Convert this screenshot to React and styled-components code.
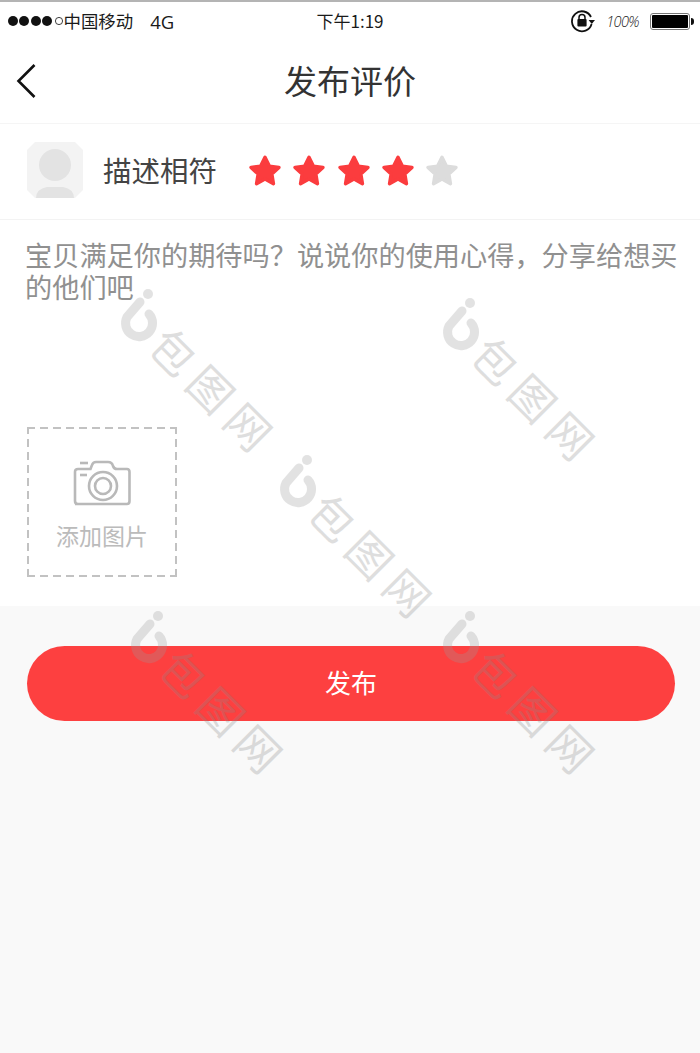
import React from "react";
import styled, { createGlobalStyle } from "styled-components";

const CJK = `"Noto Sans CJK SC", "Noto Sans", sans-serif`;

const GlobalStyle = createGlobalStyle`
  html, body {
    margin: 0;
    padding: 0;
    background: #f9f9f9;
  }
  * {
    box-sizing: border-box;
  }
`;

function App() {
  return (
    <Page>
      <GlobalStyle />
      <WhiteArea>
        <StatusBar>
          <StatusLeft>
            <Signal>
              {[0, 1, 2, 3].map((i) => (
                <Dot key={i} />
              ))}
              <Dot $empty />
            </Signal>
            <Carrier>中国移动</Carrier>
            <Network>4G</Network>
          </StatusLeft>
          <Clock>下午1:19</Clock>
          <StatusRight>
            <LockIcon />
            <Percent>100%</Percent>
            <Battery>
              <BatteryFill />
            </Battery>
          </StatusRight>
        </StatusBar>
        <NavBar>
          <BackButton>
            <svg width="24" height="36" viewBox="0 0 24 36" fill="none">
              <path d="M20.5 2 L4.5 18 L20.5 34" stroke="#111" strokeWidth="2.6" />
            </svg>
          </BackButton>
          <Title>发布评价</Title>
        </NavBar>
        <RatingRow>
          <Avatar>
            <svg width="56" height="56" viewBox="0 0 56 56">
              <circle cx="28" cy="23" r="16" fill="#e3e3e3" />
              <path d="M9 56 Q9 47 20 45 L36 45 Q47 47 47 56 Z" fill="#e3e3e3" />
            </svg>
          </Avatar>
          <RatingLabel>描述相符</RatingLabel>
          <Stars>
            {[true, true, true, true, false].map((on, i) => (
              <Star key={i} on={on} />
            ))}
          </Stars>
        </RatingRow>
        <Comment>宝贝满足你的期待吗？说说你的使用心得，分享给想买的他们吧</Comment>
        <AddPhoto>
          <CameraIcon />
          <AddPhotoText>添加图片</AddPhotoText>
        </AddPhoto>
      </WhiteArea>
      <Footer>
        <SubmitButton>发布</SubmitButton>
      </Footer>
      <Watermark $x={118} $y={288} />
      <Watermark $x={440} $y={297} />
      <Watermark $x={277} $y={454} />
      <Watermark $x={128} $y={610} />
      <Watermark $x={440} $y={610} />
    </Page>
  );
}

function Star({ on }) {
  const color = on ? "#fb3c3e" : "#dcdcdc";
  return (
    <svg width="32" height="32" viewBox="2 2.5 28 28">
      <path
        d="M16 4.5 L19.8 12.2 L28.2 13.4 L22 19.2 L23.4 27.6 L16 23.6 L8.6 27.6 L10 19.2 L3.8 13.4 L12.2 12.2 Z"
        fill={color}
        stroke={color}
        strokeWidth="3"
        strokeLinejoin="round"
      />
    </svg>
  );
}

function LockIcon() {
  return (
    <svg width="26" height="24" viewBox="0 0 26 24" fill="none">
      <path d="M21 8 A10 10 0 1 0 21.6 15" stroke="#111" strokeWidth="1.8" />
      <path d="M18.6 11 L25 11 L21.8 15 Z" fill="#111" />
      <path d="M9 10 V8.4 A3 3 0 0 1 15 8.4 V10" stroke="#111" strokeWidth="1.5" />
      <rect x="7.4" y="10" width="9.2" height="7.4" rx="1" fill="#111" />
    </svg>
  );
}

function CameraIcon() {
  return (
    <svg width="58" height="46" viewBox="0 0 58 46" fill="none" stroke="#b9b9b9" strokeWidth="2.6">
      <path d="M2 44 H54 Q56.5 44 56.5 41 V12 Q56.5 9 54 9 H44 Q41 9 40 6 Q39 2 35 2 H23 Q20 2 19 5 L17.5 9 H5 Q2 9 2 12 V41 Q2 44 5 44 Z" />
      <circle cx="30" cy="26" r="14" />
      <circle cx="30" cy="26" r="8" />
      <path d="M7 3 H15" />
      <path d="M7 15 H14" />
    </svg>
  );
}

function Watermark({ $x, $y }) {
  return (
    <WatermarkBox $x={$x} $y={$y}>
      <svg width="50" height="58" viewBox="0 0 50 58" fill="none" stroke="#9a9a9a">
        <circle cx="30" cy="6" r="5" fill="#9a9a9a" stroke="none" />
        <path
          d="M22 14 L9 29 A13.5 13.5 0 1 0 31 26"
          strokeWidth="9"
          strokeLinecap="round"
        />
      </svg>
      <WatermarkText>包图网</WatermarkText>
    </WatermarkBox>
  );
}

export default App;

const dashX = "repeating-linear-gradient(90deg, #c2c2c2 0 8px, transparent 8px 13px)";
const dashY = "repeating-linear-gradient(0deg, #c2c2c2 0 8px, transparent 8px 13px)";

const Page = styled.div`
  position: relative;
  width: 700px;
  height: 1053px;
  overflow: hidden;
  background: #f9f9f9;
  font-family: ${CJK};
`;

const WhiteArea = styled.div`
  display: flex;
  flex-direction: column;
  height: 606px;
  background: #fff;
`;

const StatusBar = styled.div`
  display: grid;
  grid-template-columns: 1fr auto 1fr;
  align-items: center;
  height: 42px;
  padding: 0 8px 2px;
  border-top: 2px solid #b4b4b4;
  color: #1a1a1a;
`;

const StatusLeft = styled.div`
  display: flex;
  align-items: center;
`;

const Signal = styled.div`
  display: flex;
  align-items: center;
  gap: 1.4px;
`;

const Dot = styled.span`
  width: 10px;
  height: 10px;
  border-radius: 50%;
  background: ${(p) => (p.$empty ? "transparent" : "#111")};
  border: ${(p) => (p.$empty ? "1px solid #111" : "none")};
  transform: ${(p) => (p.$empty ? "scale(0.8)" : "none")};
`;

const Carrier = styled.span`
  font-size: 17.4px;
  line-height: 24px;
`;

const Network = styled.span`
  margin-left: 17px;
  font-family: "Open Sans", sans-serif;
  font-size: 18.5px;
`;

const Clock = styled.div`
  font-size: 17px;
  line-height: 24px;
`;

const StatusRight = styled.div`
  display: flex;
  justify-content: flex-end;
  align-items: center;
  padding-right: 2px;
`;

const Percent = styled.span`
  margin: 0 11px 0 10px;
  font-family: "Open Sans", sans-serif;
  font-size: 14.5px;
  font-weight: 300;
  font-style: italic;
  letter-spacing: -0.6px;
  color: #222;
`;

const Battery = styled.div`
  position: relative;
  width: 40px;
  height: 17px;
  padding: 1px;
  border: 1px solid #777;
  border-radius: 3px;

  &::after {
    content: "";
    position: absolute;
    right: -5px;
    top: 4px;
    width: 3px;
    height: 7px;
    border-radius: 0 3px 3px 0;
    background: #111;
  }
`;

const BatteryFill = styled.div`
  height: 100%;
  background: #000;
  border-radius: 1px;
`;

const NavBar = styled.div`
  position: relative;
  display: flex;
  justify-content: center;
  align-items: center;
  height: 82px;
  padding-bottom: 6px;
  border-bottom: 1px solid #f5f5f5;
`;

const BackButton = styled.div`
  position: absolute;
  left: 14px;
  top: 21px;
  line-height: 0;
`;

const Title = styled.h1`
  margin: 0;
  font-size: 33px;
  font-weight: 400;
  line-height: 44px;
  color: #333;
`;

const RatingRow = styled.div`
  display: flex;
  align-items: center;
  height: 96px;
  padding: 0 0 3px 27px;
  border-bottom: 1px solid #f3f3f3;
`;

const Avatar = styled.div`
  width: 56px;
  height: 56px;
  overflow: hidden;
  line-height: 0;
  background: #f3f3f3;
  clip-path: polygon(8px 0, 48px 0, 56px 8px, 56px 48px, 48px 56px, 8px 56px, 0 48px, 0 8px);
`;

const RatingLabel = styled.span`
  margin-left: 20px;
  font-size: 28.5px;
  font-weight: 400;
  line-height: 40px;
  color: #444;
`;

const Stars = styled.div`
  display: flex;
  gap: 12.3px;
  margin: 2px 0 0 32px;
  line-height: 0;
`;

const Comment = styled.p`
  width: 660px;
  margin: 18px 0 0 25px;
  height: 189px;
  font-size: 27.2px;
  font-weight: 400;
  line-height: 32px;
  color: #909090;
`;

const AddPhoto = styled.div`
  display: flex;
  flex-direction: column;
  align-items: center;
  width: 150px;
  height: 150px;
  margin-left: 27px;
  padding-top: 33px;
  background:
    ${dashX} top / 100% 2px no-repeat,
    ${dashX} bottom / 100% 2px no-repeat,
    ${dashY} left / 2px 100% no-repeat,
    ${dashY} right / 2px 100% no-repeat;
`;

const AddPhotoText = styled.span`
  margin-top: 13px;
  font-size: 23px;
  font-weight: 400;
  line-height: 32px;
  color: #bbb;
`;

const Footer = styled.div`
  padding: 40px 25px 0 27px;
`;

const SubmitButton = styled.div`
  display: flex;
  justify-content: center;
  align-items: center;
  height: 75px;
  padding-bottom: 4px;
  border-radius: 38px;
  background: #fd4040;
  color: #fff;
  font-size: 26px;
`;

const WatermarkBox = styled.div`
  position: absolute;
  left: ${(p) => p.$x}px;
  top: ${(p) => p.$y}px;
  width: 160px;
  height: 170px;
  opacity: 0.28;
  pointer-events: none;
`;

const WatermarkText = styled.span`
  position: absolute;
  left: 15px;
  top: 81px;
  width: 165px;
  font-size: 44px;
  font-weight: 400;
  line-height: 44px;
  letter-spacing: 9px;
  text-align: center;
  white-space: nowrap;
  color: #8a8a8a;
  transform: rotate(45deg);
`;
